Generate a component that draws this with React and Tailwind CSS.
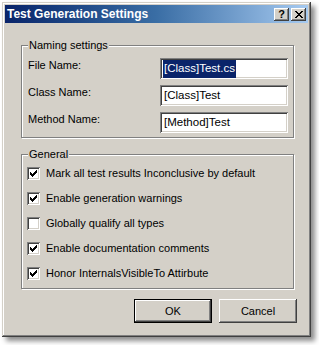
import React from "react"

const raised =
  "shadow-[inset_-1px_-1px_0_#404040,inset_1px_1px_0_#fff,inset_-2px_-2px_0_#808080,inset_2px_2px_0_#d4d0c8]"
const sunken =
  "shadow-[inset_1px_1px_0_#808080,inset_-1px_-1px_0_#fff,inset_2px_2px_0_#404040,inset_-2px_-2px_0_#d4d0c8]"
const etched = "border border-[#808080] shadow-[inset_1px_1px_0_#fff,1px_1px_0_#fff]"

function TextRow({ label, value, selected }) {
  return (
    <div className="flex items-center h-[21px]">
      <span className="w-[132px] -mt-[6px]">{label}</span>
      <div className={`w-[128px] h-[21px] bg-white flex items-center pl-[3px] pt-[1px] text-[11.5px] ${sunken}`}>
        <span className={selected ? "bg-[#0a246a] text-white px-[1px]" : "px-[1px]"}>{value}</span>
      </div>
    </div>
  )
}

function Check({ label, checked }) {
  return (
    <div className="flex items-center h-[13px] gap-[4px]">
      <div className={`w-[13px] h-[13px] bg-white shrink-0 flex items-center justify-center ${sunken}`}>
        {checked && (
          <svg width="7" height="7" viewBox="0 0 7 7">
            <path d="M0 2h1v1h1v1h1v-1h1v-1h1v-1h1v-1h1v3h-1v1h-1v1h-1v1h-1v1h-1v-1h-1v-1h-1v-1h-1z" fill="#000" />
          </svg>
        )}
      </div>
      <span className="ml-[2px]">{label}</span>
    </div>
  )
}

function Group({ title, className, children }) {
  return (
    <div className={`relative ${etched} ${className}`}>
      <span className="absolute left-[6px] -top-[8px] bg-[#d4d0c8] px-[1px] leading-[14px]">{title}</span>
      {children}
    </div>
  )
}

export default function App() {
  return (
    <div
      className="w-[319px] h-[345px] bg-white overflow-hidden pt-[2px] pl-[2px] text-[11px] text-black"
      style={{ fontFamily: '"Liberation Sans", Arial, sans-serif' }}
    >
      <div
        className={`w-[309px] h-[335px] bg-[#d4d0c8] p-[3px] shadow-[inset_-1px_-1px_0_#404040,inset_1px_1px_0_#d4d0c8,inset_-2px_-2px_0_#808080,inset_2px_2px_0_#fff,4px_4px_5px_rgba(0,0,0,0.45)]`}
      >
        <div className="h-[18px] bg-gradient-to-r from-[#0a246a] via-[#3a6ea5] to-[#a6caf0] flex items-center pl-[2px] pr-[2px]">
          <span className="text-white font-bold text-[12px] leading-none flex-1">Test Generation Settings</span>
          <div className={`w-[15px] h-[13px] bg-[#d4d0c8] flex items-center justify-center font-bold text-[11px] leading-none ${raised}`}>
            ?
          </div>
          <div className={`w-[15px] h-[13px] ml-[2px] bg-[#d4d0c8] flex items-center justify-center ${raised}`}>
            <svg width="8" height="7" viewBox="0 0 8 7">
              <path d="M0 0h2v1h1v1h2v-1h1v-1h2v1h-1v1h-1v1h-1v1h1v1h1v1h1v1h-2v-1h-1v-1h-2v1h-1v1h-2v-1h1v-1h1v-1h1v-1h-1v-1h-1v-1h-1z" fill="#000" />
            </svg>
          </div>
        </div>

        <Group title="Naming settings" className="mt-[22px] ml-[16px] w-[273px] h-[93px]">
          <div className="pt-[12px] pl-[6px] flex flex-col gap-[6px]">
            <TextRow label="File Name:" value="[Class]Test.cs" selected />
            <TextRow label="Class Name:" value="[Class]Test" />
            <TextRow label="Method Name:" value="[Method]Test" />
          </div>
        </Group>

        <Group title="General" className="mt-[16px] ml-[16px] w-[273px] h-[135px]">
          <div className="pt-[12px] pl-[5px] flex flex-col gap-[12px]">
            <Check label="Mark all test results Inconclusive by default" checked />
            <Check label="Enable generation warnings" checked />
            <Check label="Globally qualify all types" />
            <Check label="Enable documentation comments" checked />
            <Check label="Honor InternalsVisibleTo Attirbute" checked />
          </div>
        </Group>

        <div className="flex justify-end gap-[7px] mt-[10px] pr-[11px]">
          <div className="w-[78px] h-[24px] border border-black">
            <div className={`w-full h-full flex items-center justify-center ${raised}`}>OK</div>
          </div>
          <div className={`w-[78px] h-[24px] flex items-center justify-center ${raised}`}>Cancel</div>
        </div>
      </div>
    </div>
  )
}
